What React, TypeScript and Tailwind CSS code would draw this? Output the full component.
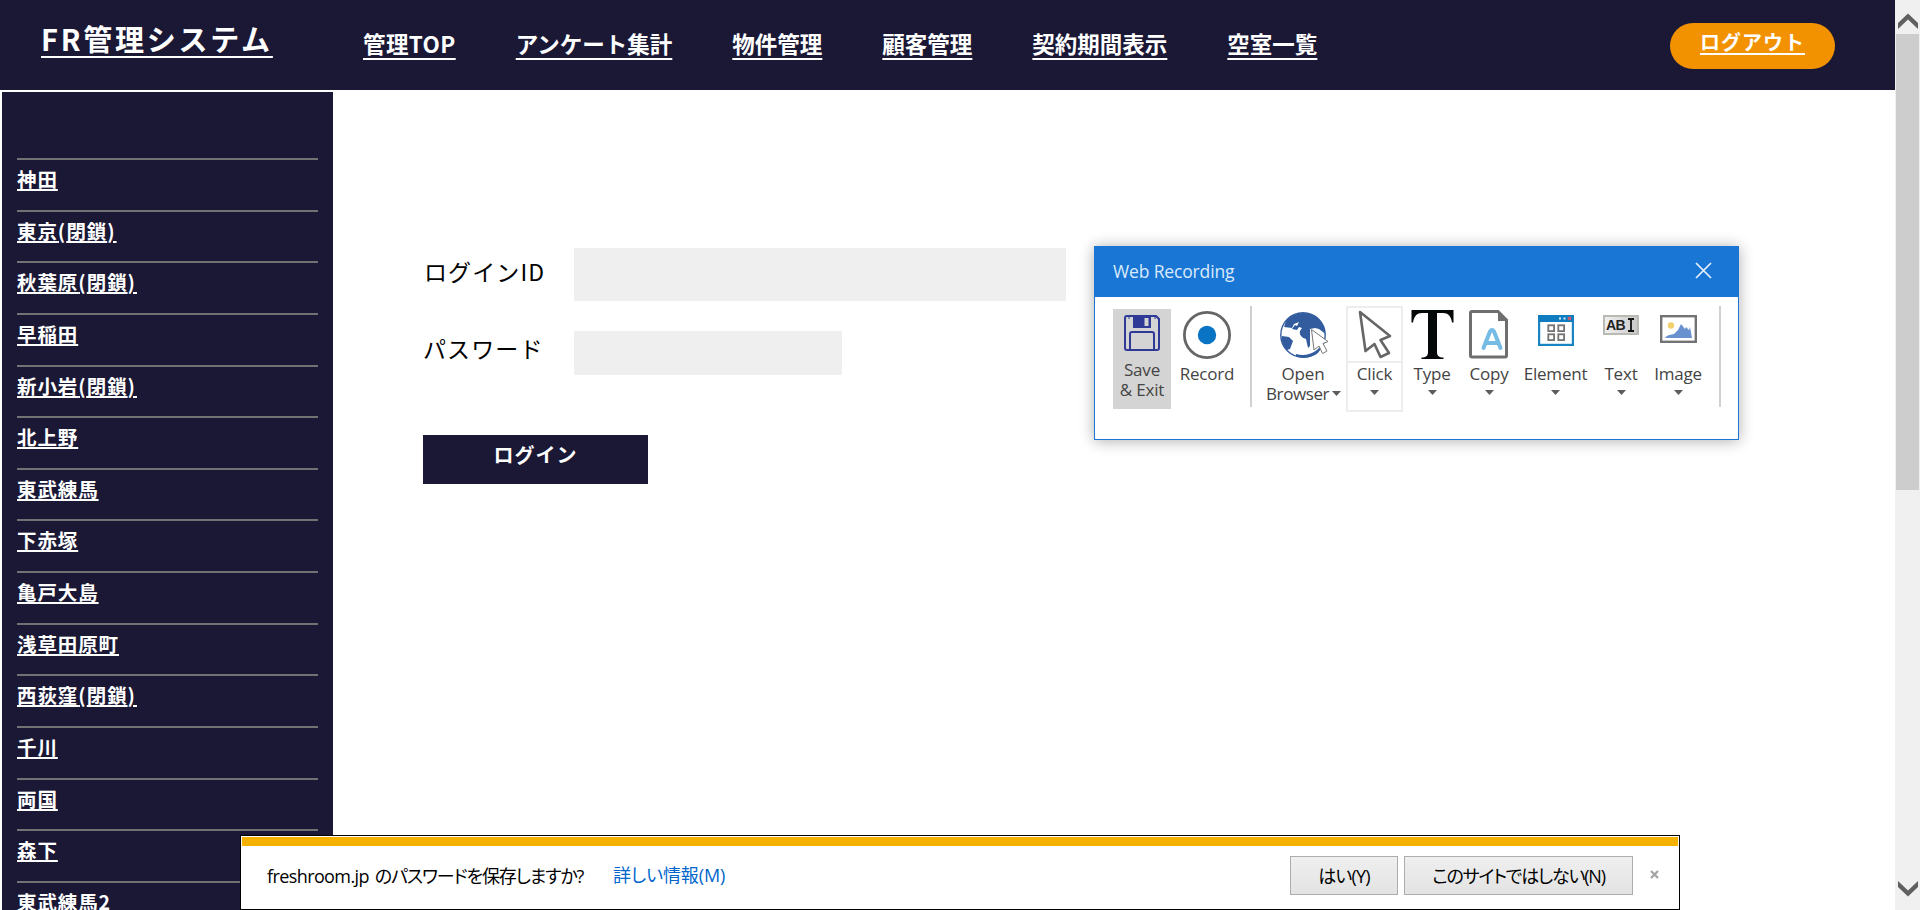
import type { ReactNode } from "react";

const navItems = [
  { label: "管理TOP", w: "tracking-[0.4px]" },
  { label: "アンケート集計", w: "" },
  { label: "物件管理", w: "" },
  { label: "顧客管理", w: "" },
  { label: "契約期間表示", w: "" },
  { label: "空室一覧", w: "" },
];

const shops = [
  "神田", "東京(閉鎖)", "秋葉原(閉鎖)", "早稲田", "新小岩(閉鎖)", "北上野", "東武練馬", "下赤塚",
  "亀戸大島", "浅草田原町", "西荻窪(閉鎖)", "千川", "両国", "森下", "東武練馬2",
];

function ShopName({ name }: { name: string }) {
  const [base, note] = name.split("(");
  if (!note) return <>{base}</>;
  return (
    <>
      {base}
      <span className="tracking-[1.200px]">(</span>
      {note.replace(")", "")}
      <span className="tracking-[2px]">)</span>
    </>
  );
}

function Caret() {
  return (
    <svg width="9" height="5" viewBox="0 0 9 5" className="shrink-0">
      <path d="M0 0H9L4.5 5Z" fill="#5c5c5c" />
    </svg>
  );
}

function Tool({ label, icon, className }: { label: string; icon: ReactNode; className: string }) {
  return (
    <div className={"flex shrink-0 flex-col items-center " + className}>
      <div className="flex h-[54px] flex-col items-center">{icon}</div>
      <div className="h-[20px] leading-[20px] whitespace-nowrap">{label}</div>
      <div className="mt-[6px] flex h-[6px] items-start">
        <Caret />
      </div>
    </div>
  );
}

const SaveIcon = () => (
  <svg width="36" height="36" viewBox="0 0 36 36" fill="none" stroke="#2f3a96" strokeWidth="2">
    <path d="M1 3Q1 1 3 1H32L35 4V33Q35 35 33 35H3Q1 35 1 33Z" />
    <path d="M6 35V19Q6 17 8 17H28Q30 17 30 19V35" />
    <path d="M9 1H27V13H9Z" fill="#2f3a96" stroke="none" />
    <path d="M20.5 3H24.5V11H20.5Z" fill="#d4d4d4" stroke="none" />
    <path d="M5 1V4M31 1V4" strokeWidth="1" />
  </svg>
);

const RecordIcon = () => (
  <svg width="48" height="48" viewBox="0 0 48 48">
    <circle cx="24" cy="24" r="22.6" fill="#fff" stroke="#666" strokeWidth="2.8" />
    <circle cx="24" cy="24" r="9.2" fill="#0a74c4" />
  </svg>
);

const GlobeIcon = () => (
  <svg width="49" height="47" viewBox="0 0 49 47">
    <circle cx="23" cy="23" r="22.2" fill="#fff" stroke="#335c9e" strokeWidth="1.4" />
    <path
      d="M6 9C13 1 26 -2 36 5C42 9 45 15 45.5 22L39 17L35 16L30 17V34L28 36L26 27C22 26 19 23 20 19L22 16L19 15L17 18L12 17L15 13L17 14L19 10L14 12L12 16L4 15Z"
      fill="#335c9e"
    />
    <path d="M2 24L9 25L13 29L10 37L7 38C3 34 1 29 2 24Z" fill="#335c9e" />
    <path d="M16 42C23 44 30 43 37 38L41 34L38 41C32 46 22 47 16 44Z" fill="#335c9e" />
    <path d="M31.500 17.500L48 29.500L43 31.500L47 39L42.500 41.500L39 34L34 38Z" fill="#fff" stroke="#777" strokeWidth="1" />
  </svg>
);

const CursorIcon = () => (
  <svg width="34" height="49" viewBox="0 0 34 49" fill="#fff" stroke="#666" strokeWidth="2.600" strokeLinejoin="round">
    <path d="M2 2L32 26L22.500 30L31 43L22.500 47L16.500 34L7.500 41Z" />
  </svg>
);

const TypeIcon = () => (
  <svg width="43" height="49" viewBox="0 0 43 49">
    <path
      d="M0.500 0H42.500V12.500H41C40 6 37 3 32 3H26V42C26 46 28 47.500 32.500 47.500V49H10.500V47.500C15 47.500 17 46 17 42V3H11C6 3 3 6 2 12.500H0.500Z"
      fill="#050808"
    />
  </svg>
);

const CopyIcon = () => (
  <svg width="40" height="49" viewBox="0 0 40 49">
    <path d="M3 1.500H29L37.500 10V45.500Q37.500 47 36 47H3Q1.500 47 1.500 45.500V3Q1.500 1.500 3 1.500Z" fill="#fff" stroke="#6e6e6e" strokeWidth="3" />
    <path d="M29 1V11H39Z" fill="#6e6e6e" />
    <path d="M14.500 38L21 21.500Q23 18.500 25 21.500L31.500 38M17.500 33H28.500" fill="none" stroke="#76bbe3" strokeWidth="4" strokeLinecap="round" />
  </svg>
);

const ElementIcon = () => (
  <svg width="36" height="31" viewBox="0 0 36 31">
    <rect x="1" y="1" width="34" height="29" fill="#fff" stroke="#1a84c3" strokeWidth="2.400" />
    <rect width="36" height="7" fill="#0f7dbf" />
    <path d="M21 3.500H23M25.500 3.500H27.500" stroke="#d8ecf7" strokeWidth="2" />
    <path d="M30 2L33 5M33 2L30 5" stroke="#e0596a" strokeWidth="1.500" />
    <g fill="#fff" stroke="#737373" strokeWidth="1.800">
      <rect x="10.300" y="10.300" width="5.800" height="5.800" />
      <rect x="20.300" y="10.300" width="5.800" height="5.800" />
      <rect x="10.300" y="19.300" width="5.800" height="5.800" />
      <rect x="20.300" y="19.300" width="5.800" height="5.800" />
    </g>
  </svg>
);

const TextIcon = () => (
  <div className="flex h-[20px] w-[36px] items-center border-2 border-[#babab4] bg-gradient-to-r from-[#f0f0f0] to-[#cacaca] pl-[1px] font-['Liberation_Sans'] text-[14px] font-bold leading-none text-[#222]">
    <span className="w-[20px] tracking-[-0.5px]">AB</span>
    <svg width="8" height="14" viewBox="0 0 8 14" fill="none" stroke="#111" strokeWidth="1.800" className="ml-[1px]">
      <path d="M1 1H3L4 2L5 1H7M4 2V12M1 13H3L4 12L5 13H7" />
    </svg>
  </div>
);

const ImageIcon = () => (
  <svg width="37" height="28" viewBox="0 0 37 28">
    <rect x="1.200" y="1.200" width="34.600" height="25.600" fill="#fff" stroke="#737373" strokeWidth="2.400" />
    <circle cx="11" cy="10.500" r="3.200" fill="#efd06d" />
    <path d="M5 23Q6 20 14 19L18 15L21 9L25 14L26 12L29 15L30 12L32 23Z" fill="#6991d0" />
  </svg>
);

function RecorderWindow() {
  return (
    <section className="absolute top-[246px] left-[1094px] flex h-[194px] w-[645px] flex-col border border-[#1976d5] bg-white font-['Open_Sans',sans-serif] text-[17px] tracking-[-0.200px] text-[#444] shadow-[0_1px_14px_rgba(0,0,0,0.32)]">
      <div className="flex h-[50px] shrink-0 items-center justify-between bg-[#1976d5] pr-[26px] pl-[18px] text-[#dbeafa]">
        <span className="mb-[2px] text-[17.500px] tracking-[-0.150px]">Web Recording</span>
        <svg width="17" height="17" viewBox="0 0 17 17" stroke="#e8f1fb" strokeWidth="1.700" className="mb-[3px]">
          <path d="M1 1L16 16M16 1L1 16" />
        </svg>
      </div>
      <div className="flex pt-[9px] pl-[18px]">
        <div className="mt-[3px] flex h-[100px] w-[58px] shrink-0 flex-col items-center bg-[#d4d4d4] pt-[6px]">
          <SaveIcon />
          <span className="mt-[9px] text-center leading-[19.500px] whitespace-nowrap">
            Save
            <br />
            &amp; Exit
          </span>
        </div>
        <div className="flex w-[72px] shrink-0 flex-col items-center pt-[5px]">
          <RecordIcon />
          <span className="mt-[5px] leading-[20px]">Record</span>
        </div>
        <div className="ml-[7px] h-[101px] w-[2px] shrink-0 bg-[#d0d0d0]" />
        <div className="flex w-[94px] shrink-0 flex-col pt-[6px] pl-[14px]">
          <div className="pl-[14px]">
            <GlobeIcon />
          </div>
          <span className="mt-[5px] w-[74px] text-center leading-[20px]">Open</span>
          <span className="flex items-center gap-[3px] leading-[19px] tracking-[-0.400px]">
            Browser <Caret />
          </span>
        </div>
        <div className="flex h-[106px] w-[57px] shrink-0 flex-col items-center border-2 border-[#ededed] pt-[2px]">
          <div className="flex h-[53px] w-full justify-center border-b-2 border-[#ededed]">
            <CursorIcon />
          </div>
          <span className="mt-[1px] leading-[20px]">Click</span>
          <div className="mt-[6px] flex">
            <Caret />
          </div>
        </div>
        <Tool label="Type" className="w-[58px] pt-[4px]" icon={<TypeIcon />} />
        <Tool label="Copy" className="w-[56px] pt-[4px]" icon={<CopyIcon />} />
        <Tool label="Element" className="w-[77px] pt-[4px]" icon={<div className="pt-[5px]"><ElementIcon /></div>} />
        <Tool label="Text" className="w-[54px] pt-[4px]" icon={<div className="pt-[5px]"><TextIcon /></div>} />
        <Tool label="Image" className="w-[60px] pt-[4px]" icon={<div className="pt-[5px]"><ImageIcon /></div>} />
        <div className="ml-[11px] h-[101px] w-[2px] shrink-0 bg-[#d0d0d0]" />
      </div>
    </section>
  );
}

function PasswordBar() {
  return (
    <section className="absolute top-[835px] left-[240px] flex h-[75px] w-[1440px] flex-col border border-black bg-white pt-[1px] font-['Open_Sans','Noto_Sans_CJK_JP',sans-serif] text-[18px] text-black">
      <div className="mx-[1px] h-[9px] shrink-0 bg-[#f5b100]" />
      <div className="flex h-[58px] items-center pr-[20px] pl-[26px] whitespace-nowrap">
        <span className="flex w-[346px] gap-[6px] pt-[2px]">
          <span className="tracking-[-0.600px]">freshroom.jp</span>
          <span className="tracking-[-1.150px] [font-feature-settings:'palt']">のパスワードを保存しますか?</span>
        </span>
        <a className="pt-[1px] tracking-[-0.100px] text-[#0066cc] [font-feature-settings:'palt']">詳しい情報(M)</a>
        <button className="ml-auto h-[39px] w-[108px] border border-[#adadad] bg-gradient-to-b from-[#efefef] to-[#e3e3e3] pt-[2px] tracking-[-0.800px] [font-feature-settings:'palt']">
          はい(Y)
        </button>
        <button className="ml-[6px] h-[39px] w-[229px] border border-[#adadad] bg-gradient-to-b from-[#efefef] to-[#e3e3e3] pt-[2px] tracking-[-1.200px] [font-feature-settings:'palt']">
          このサイトではしない(N)
        </button>
        <svg width="9" height="9" viewBox="0 0 9 9" stroke="#a6a6a6" strokeWidth="2.400" className="mb-[2px] ml-[17px]">
          <path d="M1 1L8 8M8 1L1 8" />
        </svg>
      </div>
    </section>
  );
}

export default function App() {
  return (
    <div className="relative flex h-[910px] w-[1920px] overflow-hidden bg-white font-['Noto_Sans_CJK_JP',sans-serif] text-black">
      <div className="flex w-[1895px] flex-col">
        <header className="flex h-[90px] shrink-0 bg-[#1a1835] font-bold text-white">
          <a className="ml-[41px] h-[60px] w-[322px] pt-[18px] text-[29px] leading-[40px] tracking-[2.750px] underline decoration-2 underline-offset-[5px]">
            FR管理システム
          </a>
          <nav className="flex gap-[60px] pt-[27px] text-[22.500px] leading-[32px]">
            {navItems.map((n) => (
              <a key={n.label} className={"whitespace-nowrap underline decoration-2 underline-offset-[5px] " + n.w}>
                {n.label}
              </a>
            ))}
          </nav>
          <a className="mt-[23px] mr-[60px] ml-auto flex h-[46px] w-[165px] justify-center rounded-full bg-[#f39200] pt-[4px] text-[20px] leading-[30px] tracking-[1px] underline decoration-2 underline-offset-[3px]">
            ログアウト
          </a>
        </header>
        <div className="flex min-h-0 flex-1 pt-[2px] pl-[2px]">
          <aside className="w-[331px] shrink-0 overflow-hidden bg-[#1a1835] px-[15px] pt-[66px]">
            {shops.map((s) => (
              <div
                key={s}
                className="h-[51.640px] border-t-2 border-[#707274] pt-[5px] text-[19.500px] leading-[28px] font-bold tracking-[0.900px] text-white"
              >
                <a className="underline decoration-2 underline-offset-[2px]">
                  <ShopName name={s} />
                </a>
              </div>
            ))}
          </aside>
          <main className="pt-[156px] pl-[90px]">
            <div className="flex h-[53px]">
              <label className="w-[151px] pt-[5px] pl-[1px] text-[23px] leading-[36px] tracking-[1.100px]">ログインID</label>
              <div className="w-[492px] bg-[#efefef]" />
            </div>
            <div className="mt-[30px] flex h-[44px]">
              <label className="-mt-[1px] w-[151px] text-[23px] leading-[36px] tracking-[1.100px]">パスワード</label>
              <div className="w-[268px] bg-[#efefef]" />
            </div>
            <button className="mt-[60px] flex h-[49px] w-[225px] justify-center bg-[#1a1835] pt-[5px] text-[20px] leading-[30px] font-bold tracking-[1px] text-white">
              ログイン
            </button>
          </main>
        </div>
      </div>
      <div className="flex w-[25px] flex-col items-center bg-[#f0f0f0] pt-[13px] pb-[13px]">
        <svg width="20" height="16" viewBox="0 0 20 16">
          <path d="M0 10L10 0.500L20 10V16L10 6.500L0 16Z" fill="#606060" />
        </svg>
        <div className="mt-[5px] h-[456px] w-[23px] bg-[#cdcdcd]" />
        <svg width="20" height="16" viewBox="0 0 20 16" className="mt-auto">
          <path d="M0 0L10 9.500L20 0V6L10 15.500L0 6Z" fill="#606060" />
        </svg>
      </div>
      <RecorderWindow />
      <PasswordBar />
    </div>
  );
}
